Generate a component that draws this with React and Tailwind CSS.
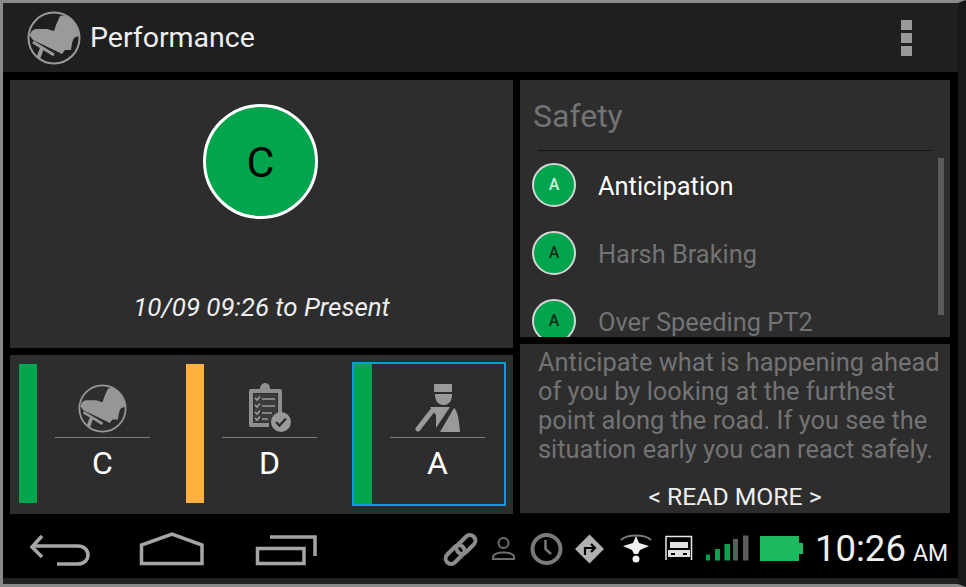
import React from "react";

const Seat = ({ size, stroke = "#9a9a9a", sw = 2 }) => (
  <svg width={size} height={size} viewBox="0 0 54 54">
    <circle cx="27" cy="27" r="25.5" fill="none" stroke={stroke} strokeWidth={sw} />
    <clipPath id={"c" + size}><circle cx="27" cy="27" r="25" /></clipPath>
    <g clipPath={"url(#c" + size + ")"} fill={stroke}>
      <path d="M3 25 C3 21 6 18 10 18 L20 18 L27 20 L29 14 L33 5 L45 3 L54 14 L54 24 L47 27 L45 32 L44 39 L38 39 L35 43 L29 40 L6 29 Z" />
    </g>
    <g stroke={stroke} fill="none" clipPath={"url(#c" + size + ")"}>
      <path d="M6 31 L27 44" strokeWidth="3" />
      <path d="M15 37 L11 48" strokeWidth="4" />
    </g>
  </svg>
);

const Clipboard = () => (
  <svg width="42" height="50" viewBox="0 0 42 50">
    <path d="M2 6 H11 C11 2 14 0 16 0 C19 0 21 2 21 6 H31 C32 6 33 7 33 8 V31 A12 12 0 0 0 20 44 H2 C1 44 0 43 0 42 V8 C0 7 1 6 2 6Z" fill="#8f8f8f" />
    <rect x="4" y="10" width="25" height="30" fill="#2d2d2d" />
    <rect x="5" y="11" width="23" height="28" fill="#8f8f8f" fillOpacity="0.15" />
    <g stroke="#9a9a9a" strokeWidth="1.6" fill="none">
      <path d="M6 15 l2 2 l3 -3.5 M6 22 l2 2 l3 -3.5 M6 29 l2 2 l3 -3.5 M6 35 l2 2 l3 -3.5" />
      <path d="M13 16 H26 M13 23 H26 M13 30 H23 M13 36 H19" />
    </g>
    <circle cx="32" cy="39" r="10" fill="#9a9a9a" />
    <path d="M27 39 l3.500 3.500 l6.500 -7" stroke="#2d2d2d" strokeWidth="2.400" fill="none" />
  </svg>
);

const Driver = () => (
  <svg width="46" height="50" viewBox="0 0 46 50">
    <path d="M19 1 H37 V9 H19 Z" fill="#9a9a9a" />
    <path d="M20 11 H37 C37 18 34 22 28.500 22 C23 22 20 18 20 11 Z" fill="#9a9a9a" />
    <path d="M17 28 L3 46" stroke="#9a9a9a" strokeWidth="5" strokeLinecap="round" />
    <path d="M15 24 H35 L21 45 V32 Z" fill="#9a9a9a" />
    <path d="M39 25 C42 27 44 35 45 49 H25 Z" fill="#9a9a9a" />
  </svg>
);

const Tile = ({ bar, icon, grade, selected, w }) => (
  <div className={selected
    ? "flex w-[154px] h-[144px] border-2 border-[#0b9bd8]"
    : "flex h-[139px] mt-[2px]"} style={w ? { width: w } : undefined}>
    <div className="w-[18px] h-full shrink-0" style={{ backgroundColor: bar }} />
    <div className="w-[95px] ml-[18px] flex flex-col items-center">
      <div className="h-[73px] flex items-end justify-center pb-[4px] w-full">{icon}</div>
      <div className="w-full h-[1px] bg-[#7d7d7d]" />
      <div className="text-[32px] leading-[50px] text-white">{grade}</div>
    </div>
  </div>
);

const Row = ({ name, active }) => (
  <div className="flex items-center h-[68px] shrink-0">
    <div className={`w-[44px] h-[44px] rounded-full bg-[#02a54d] border-2 border-[#d5d5d5] flex items-center justify-center text-[16px] font-medium ${active ? "text-[#cfeedd]" : "text-[#0a2c18]"}`}>A</div>
    <div className={`ml-[22px] pt-[3px] text-[25.400px] ${active ? "text-white" : "text-[#737373]"}`}>{name}</div>
  </div>
);

export default function App() {
  return (
    <div className="w-[966px] h-[587px] bg-black flex flex-col overflow-hidden border-t-[3px] border-l-[3px] border-b-[3px] border-r-[8px] border-t-[#8a8a8a] border-l-[#8a8a8a] border-b-[#8a8a8a] border-r-[#181818]" style={{ fontFamily: "Roboto, 'Liberation Sans', sans-serif" }}>
      <div className="h-[69px] shrink-0 bg-[#1f1f1f] flex items-center pl-[24px] pr-[46px]">
        <Seat size={54} />
        <div className="ml-[9px] pt-[2px] text-[28.500px] text-[#eeeeee]">Performance</div>
        <div className="ml-auto flex flex-col gap-[3px]">
          <div className="w-[11px] h-[10px] bg-[#999999]" />
          <div className="w-[11px] h-[10px] bg-[#999999]" />
          <div className="w-[11px] h-[10px] bg-[#999999]" />
        </div>
      </div>

      <div className="h-[442px] shrink-0 flex gap-[7px] pl-[7px] pt-[8px]">
        <div className="w-[503px] flex flex-col gap-[7px]">
          <div className="h-[268px] bg-[#2d2d2d] flex flex-col items-center">
            <div className="mt-[24px] mr-[2px] w-[115px] h-[115px] rounded-full bg-[#02a54d] border-[3px] border-white flex items-center justify-center pt-[2px] text-[43px] text-black">C</div>
            <div className="mt-[71px] text-[25.900px] italic text-[#eeeeee] leading-[34px]">10/09 09:26 to Present</div>
          </div>
          <div className="h-[159px] bg-[#2d2d2d] flex pl-[9px] pt-[7px]">
            <Tile bar="#02a54d" w={167} icon={<Seat size={49} stroke="#969696" />} grade="C" />
            <Tile bar="#ffb03f" w={166} icon={<Clipboard />} grade="D" />
            <Tile bar="#02a54d" icon={<Driver />} grade="A" selected />
          </div>
        </div>

        <div className="w-[430px] flex flex-col gap-[7px]">
          <div className="h-[257px] bg-[#2d2d2d] relative overflow-hidden pl-[12px]">
            <div className="text-[32px] text-[#737373] leading-[40px] mt-[16px] ml-[1px]">Safety</div>
            <div className="h-[1px] bg-[#141414] w-[394px] ml-[6px] mt-[14px]" />
            <div className="flex flex-col"><Row name="Anticipation" active /><Row name="Harsh Braking" /><Row name="Over Speeding PT2" /></div>
            <div className="absolute left-[418px] top-[78px] w-[6px] h-[157px] bg-[#5a5a5a]" />
          </div>
          <div className="h-[169px] bg-[#2d2d2d] pl-[18px]">
            <div className="text-[25.400px] leading-[29px] text-[#737373] whitespace-pre-line pt-[4px]">{"Anticipate what is happening ahead\nof you by looking at the furthest\npoint along the road. If you see the\nsituation early you can react safely."}</div>
            <div className="mt-[19px] text-[24.700px] leading-[28px] text-[#eeeeee] text-center pr-[18px]">&lt; READ MORE &gt;</div>
          </div>
        </div>
      </div>

      <div className="h-[64px] shrink-0 bg-black flex items-center relative">
        <svg width="320" height="64" viewBox="0 0 320 64" className="shrink-0">
          <g fill="none" stroke="#a6a6a6" strokeWidth="3.500">
            <path d="M39 22 L29 33 L39 43" />
            <path d="M29 32 H75 C81 32 85 36 85 41 C85 46 81 50 75 50 H54" />
            <path d="M138.500 49.500 V31 L169 20 L199 31 V49.500 Z" />
            <path d="M254.500 34.500 H301 V49.500 H254.500 Z" />
            <path d="M267 23 H312 V42" />
          </g>
        </svg>
        <svg width="320" height="64" viewBox="0 0 320 64" className="absolute left-[442px] top-[7px] overflow-visible">
          <g fill="none" stroke="#8c8c8c" strokeWidth="4">
            <rect x="-1" y="28" width="22" height="11" rx="5.500" transform="rotate(-45 10 33.500)" />
            <rect x="10" y="18" width="22" height="11" rx="5.500" transform="rotate(-45 21 23.500)" />
          </g>
          <g fill="none" stroke="#6e6e6e" strokeWidth="2">
            <circle cx="58.500" cy="22" r="5" />
            <path d="M48 38 V36 C48 30 69 30 69 36 V38 Z" />
          </g>
          <circle cx="101.500" cy="28" r="14" fill="none" stroke="#7a7a7a" strokeWidth="4" />
          <path d="M100.500 19 V28 L106 33" fill="none" stroke="#7a7a7a" strokeWidth="2.500" />
          <path d="M144.500 13.500 L159 28 L144.500 42.500 L130 28 Z" fill="#b0b0b0" />
          <path d="M140 34 V27 H149 M146 23 L150 27 L146 31" fill="none" stroke="#000" strokeWidth="2.200" />
          <path d="M176 19 C182 13 200 13 206 19" fill="none" stroke="#7a7a7a" strokeWidth="2" />
          <path d="M191 15 L194 22 L204 25 L195 29 L193 33 H189 L187 29 L178 25 L188 22 Z" fill="#f0f0f0" />
          <circle cx="191" cy="38" r="3.500" fill="#f0f0f0" />
          <path d="M221 39 V15.500 H246.500 V39" fill="none" stroke="#e8e8e8" strokeWidth="1.500" />
          <path d="M225 21 H243 V27 H225 Z M223 29 H245 V36 H223 Z" fill="#e0e0e0" />
          <rect x="226" y="32" width="4" height="2" fill="#000" /><rect x="238" y="32" width="4" height="2" fill="#000" />
          <rect x="261" y="33.500" width="4" height="6" fill="#02a54d" />
          <rect x="270" y="28" width="5" height="11.500" fill="#02a54d" />
          <rect x="279.500" y="23" width="5.500" height="16.500" fill="#02a54d" />
          <rect x="288" y="18" width="5" height="21.500" fill="#5c5c5c" />
          <rect x="298" y="14.500" width="5.500" height="25" fill="#5c5c5c" />
        </svg>
        <div className="absolute left-[757px] top-[22px] w-[39px] h-[25px] bg-[#1cbb62]" />
        <div className="absolute left-[796px] top-[29px] w-[4px] h-[11px] bg-[#1cbb62]" />
        <div className="absolute left-[812px] top-[14px] flex items-baseline text-[#f0f0f0]">
          <span className="text-[36.500px] leading-[42px]">10:26</span>
          <span className="ml-[7px] text-[23px]">AM</span>
        </div>
      </div>
      <div className="flex-1 bg-[#222222]" />
    </div>
  );
}
